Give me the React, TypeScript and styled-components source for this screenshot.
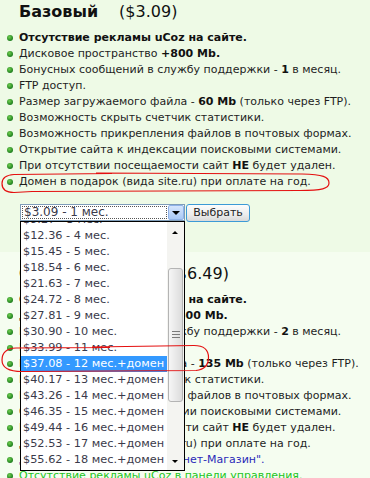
import React from "react";
import styled, { createGlobalStyle } from "styled-components";

const GlobalStyle = createGlobalStyle`
  html, body {
    margin: 0;
    padding: 0;
  }
  body {
    font-family: "DejaVu Sans", Verdana, sans-serif;
    color: #1e1e1e;
    background: #f5fdf0;
  }
`;

type Tone = "plain" | "blue" | "green";
type Feature = { text: React.ReactNode; tone?: Tone };

const MONTH_PRICE = 3.09;

const basicFeatures: Feature[] = [
  { text: <b>Отсутствие рекламы uCoz на сайте.</b> },
  { text: <>Дисковое пространство <b>+800 Mb.</b></> },
  { text: <>Бонусных сообщений в службу поддержки - <b>1</b> в месяц.</> },
  { text: "FTP доступ." },
  { text: <>Размер загружаемого файла - <b>60 Mb</b> (только через FTP).</> },
  { text: "Возможность скрыть счетчик статистики." },
  { text: "Возможность прикрепления файлов в почтовых формах." },
  { text: "Открытие сайта к индексации поисковыми системами." },
  { text: <>При отсутствии посещаемости сайт <b>НЕ</b> будет удален.</> },
  { text: "Домен в подарок (вида site.ru) при оплате на год." },
];

const optimalFeatures: Feature[] = [
  { text: <b>Отсутствие рекламы uCoz на сайте.</b> },
  { text: <>Дисковое пространство <b>+1500 Mb.</b></> },
  { text: <>Бонусных сообщений в службу поддержки - <b>2</b> в месяц.</> },
  { text: "FTP доступ." },
  { text: <>Размер загружаемого файла - <b>135 Mb</b> (только через FTP).</> },
  { text: "Возможность скрыть счетчик статистики." },
  { text: "Возможность прикрепления файлов в почтовых формах." },
  { text: "Открытие сайта к индексации поисковыми системами." },
  { text: <>При отсутствии посещаемости сайт <b>НЕ</b> будет удален.</> },
  { text: "Домен в подарок (вида site.ru) при оплате на год." },
  { text: 'Доступен модуль "Интернет-Магазин".', tone: "blue" },
  { text: "Отсутствие рекламы uCoz в панели управления.", tone: "green" },
];

const periods = Array.from({ length: 24 }, (_, i) => {
  const months = i + 1;
  const price = (MONTH_PRICE * months).toFixed(2);
  return `$${price} - ${months} мес.${months >= 12 ? "+домен" : ""}`;
});

export default function App() {
  return (
    <Page>
      <GlobalStyle />
      <Plan $tone="dark" $top={0} $bottom={31}>
        <Title>
          <b>Базовый</b>
          <Price $gap={21}>($3.09)</Price>
        </Title>
        <Features>
          {basicFeatures.map((f, i) => (
            <FeatureItem key={i} $tone={f.tone ?? "plain"}>
              {f.text}
            </FeatureItem>
          ))}
        </Features>
        <OrderRow>
          <SelectBox>
            <SelectValue>{periods[0]}</SelectValue>
            <SelectArrow />
            <DropList>
              <Options>
                {periods.map((p, i) => (
                  <Option key={p} $selected={i === 11}>
                    {p}
                  </Option>
                ))}
              </Options>
              <Scrollbar>
                <ScrollButton $dir="up" />
                <Thumb />
                <ScrollButton $dir="down" />
              </Scrollbar>
            </DropList>
          </SelectBox>
          <ChooseButton>Выбрать</ChooseButton>
        </OrderRow>
      </Plan>
      <Plan $tone="light" $top={10} $bottom={20}>
        <Title>
          <b>Оптимальный</b>
          <Price $gap={24}>($6.49)</Price>
        </Title>
        <Features>
          {optimalFeatures.map((f, i) => (
            <FeatureItem key={i} $tone={f.tone ?? "plain"} $lead={f.tone === "blue" ? 18 : 0}>
              {f.text}
            </FeatureItem>
          ))}
        </Features>
      </Plan>
      <Marks viewBox="0 0 370 478">
        <path d="M 112 173.5 L 14 174.5 C 6 175, 2 178.5, 2 183.5 C 2 189, 6 192.5, 14 192.5 L 32 191.5 L 300 190.5 C 322 190.5, 329 188.5, 329 183 C 329 177, 323 174.5, 302 174 L 96 173" />
        <path d="M 110 347.5 L 16 348 C 6 348.5, 2 353.5, 2 360 C 2 367, 7 371.5, 22 371.5 L 196 370.5 C 204 369.5, 208.5 365, 208.5 357.5 C 208.5 350, 204 345.5, 194 345.5 L 92 347" />
      </Marks>
    </Page>
  );
}

const Page = styled.div`
  position: relative;
  width: 370px;
  height: 478px;
  overflow: hidden;
  background: #f5fdf0;
`;

const Plan = styled.section<{ $tone: "dark" | "light"; $top: number; $bottom: number }>`
  background: ${(p) => (p.$tone === "dark" ? "#eefae6" : "#f5fdf0")};
  padding: ${(p) => p.$top}px 0 ${(p) => p.$bottom}px;
`;

const Title = styled.h2`
  margin: 0;
  padding-left: 19px;
  font-size: 16px;
  line-height: 24px;
  font-weight: normal;
  color: #111;
  white-space: nowrap;

  b {
    font-weight: bold;
  }
`;

const Price = styled.span<{ $gap: number }>`
  margin-left: ${(p) => p.$gap}px;
`;

const Features = styled.ul`
  margin: 6px 0 0;
  padding: 0;
  list-style: none;
`;

const toneColor: Record<Tone, string> = {
  plain: "#1e1e1e",
  blue: "#2a2ab8",
  green: "#22c422",
};

const FeatureItem = styled.li<{ $tone: Tone; $lead?: number }>`
  position: relative;
  padding-left: 19px;
  font-size: 11px;
  line-height: 16px;
  white-space: nowrap;
  word-spacing: ${(p) => (p.$lead ? `${p.$lead / 2}px` : "normal")};
  color: ${(p) => toneColor[p.$tone]};

  b {
    color: #111;
  }

  &::before {
    content: "";
    position: absolute;
    left: 7px;
    top: 5px;
    width: 6px;
    height: 6px;
    border-radius: 50%;
    background: radial-gradient(circle at 40% 35%, #6fcf4f, #1f7f1f 70%);
  }
`;

const OrderRow = styled.div`
  display: flex;
  align-items: center;
  gap: 1px;
  margin: 14px 0 0 20px;
  height: 17px;
`;

const SelectBox = styled.div`
  position: relative;
  display: flex;
  box-sizing: border-box;
  width: 165px;
  height: 17px;
  border: 1px solid #7f9db9;
  background: #fff;
`;

const SelectValue = styled.div`
  flex: 1;
  margin: 1px;
  padding-left: 1px;
  border: 1px dotted #555;
  font-size: 12px;
  line-height: 11px;
  color: #3a3a4a;
  white-space: nowrap;
  overflow: hidden;
`;

const SelectArrow = styled.div`
  position: relative;
  width: 16px;
  box-sizing: border-box;
  border: 1px solid #8fb2e8;
  border-radius: 2px;
  background: linear-gradient(#d6e6fd, #a9c8f5);

  &::after {
    content: "";
    position: absolute;
    left: 3px;
    top: 5px;
    border-left: 4px solid transparent;
    border-right: 4px solid transparent;
    border-top: 4px solid #000;
  }
`;

const DropList = styled.div`
  position: absolute;
  top: 16px;
  left: -1px;
  z-index: 5;
  display: flex;
  box-sizing: border-box;
  width: 165px;
  height: 250px;
  border: 1px solid #000;
  background: #fff;
  overflow: hidden;
`;

const Options = styled.div`
  flex: 1;
  min-width: 0;
  overflow: hidden;
  padding-top: 3px;
  margin-top: -45px;
`;

const Option = styled.div<{ $selected: boolean }>`
  height: 16px;
  line-height: 16px;
  padding-left: 2px;
  font-size: 11.3px;
  white-space: nowrap;
  overflow: hidden;
  color: ${(p) => (p.$selected ? "#fff" : "#3a3a4a")};
  background: ${(p) => (p.$selected ? "#3399ff" : "transparent")};
`;

const Scrollbar = styled.div`
  display: flex;
  flex-direction: column;
  flex: 0 0 17px;
  background: #f4f4f1;
`;

const ScrollButton = styled.div<{ $dir: "up" | "down" }>`
  position: relative;
  height: ${(p) => (p.$dir === "up" ? 22 : 16)}px;
  margin-top: ${(p) => (p.$dir === "up" ? 0 : "auto")};

  &::after {
    content: "";
    position: absolute;
    left: 5px;
    top: ${(p) => (p.$dir === "up" ? 9 : 6)}px;
    border-left: 3px solid transparent;
    border-right: 3px solid transparent;
    ${(p) => (p.$dir === "up" ? "border-bottom" : "border-top")}: 3px solid #000;
  }
`;

const Thumb = styled.div`
  position: relative;
  margin: 24px 1px 0;
  height: 134px;
  box-sizing: border-box;
  border: 1px solid #b4b4b4;
  border-radius: 3px;
  background: linear-gradient(to right, #f6f6f6, #dcdcdc);

  &::after {
    content: "";
    position: absolute;
    left: 3px;
    top: 62px;
    width: 8px;
    height: 7px;
    background: repeating-linear-gradient(#7a7a7a 0 1px, transparent 1px 3px);
  }
`;

const ChooseButton = styled.button`
  box-sizing: border-box;
  width: 64px;
  height: 18px;
  padding: 0;
  border: 1px solid #3c9ad6;
  border-radius: 3px;
  background: linear-gradient(#fcfcfc, #ececec 60%, #d9d9d9);
  font-family: "DejaVu Sans", Verdana, sans-serif;
  font-size: 11px;
  line-height: 14px;
  color: #222;
`;

const Marks = styled.svg`
  position: absolute;
  top: 0;
  left: 0;
  width: 370px;
  height: 478px;
  z-index: 10;
  pointer-events: none;
  fill: none;
  stroke: #e41010;
  stroke-width: 1.2;
`;
